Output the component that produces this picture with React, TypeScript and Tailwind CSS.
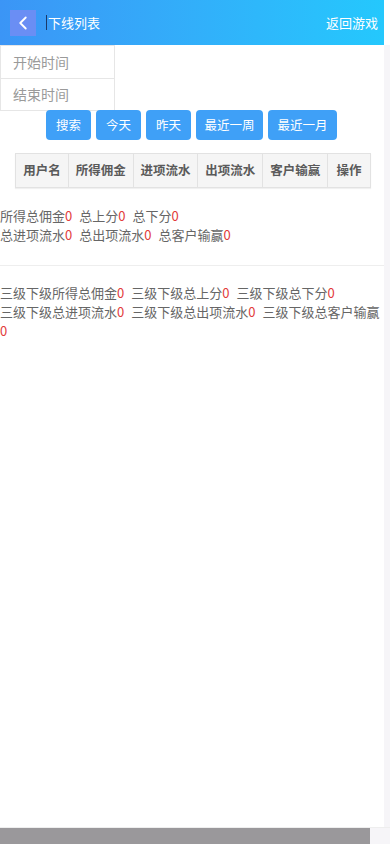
import { ChevronLeft } from 'lucide-react';

const cols = [
  { label: '用户名', w: 'w-[53px]' },
  { label: '所得佣金', w: 'w-[65px]' },
  { label: '进项流水', w: 'w-[65px]' },
  { label: '出项流水', w: 'w-[65px]' },
  { label: '客户输赢', w: 'w-[65px]' },
  { label: '操作', w: 'w-[42px]' },
];

const buttons = [
  { label: '搜索', w: 'w-[45px]' },
  { label: '今天', w: 'w-[45px]' },
  { label: '昨天', w: 'w-[45px]' },
  { label: '最近一周', w: 'w-[67px]' },
  { label: '最近一月', w: 'w-[69px]' },
];

function Stat({ label }: { label: string }) {
  return (
    <span className="mr-[7px] whitespace-nowrap">
      {label}
      <span className="text-[#e23b3b]">0</span>
    </span>
  );
}

export default function App() {
  return (
    <div
      className="w-[390px] h-[844px] flex flex-col bg-white overflow-hidden"
      style={{ fontFamily: '"Microsoft YaHei", "Noto Sans CJK SC", "Noto Sans", sans-serif' }}
    >
      <div className="flex flex-1 min-h-0">
        {/* Page */}
        <div className="w-[384px] flex flex-col">
          {/* Header */}
          <header className="h-[45px] flex items-center bg-gradient-to-r from-[#3b95f6] to-[#24c8fd] text-white pl-[10px] pr-[6px]">
            <div className="w-[26px] h-[26px] bg-[#6a8ef4] flex items-center justify-center">
              <ChevronLeft className="w-[22px] h-[22px]" strokeWidth={2} />
            </div>
            <div className="ml-[10px] flex items-center text-[13px]">
              <span className="w-[1px] h-[15px] bg-[#1b3a6a] mr-[1px]" />
              下线列表
            </div>
            <div className="flex-1" />
            <span className="text-[13px]">返回游戏</span>
          </header>

          {/* Date inputs */}
          <div className="flex flex-col">
            <div className="w-[115px] h-[34px] border border-[#e6e6e6] flex items-center pl-[12px] text-[14px] text-[#9a9a9a]">
              开始时间
            </div>
            <div className="w-[115px] h-[32px] border border-t-0 border-[#e6e6e6] flex items-center pl-[12px] text-[14px] text-[#9a9a9a]">
              结束时间
            </div>
          </div>

          {/* Buttons */}
          <div className="flex gap-[5px] pl-[46px] -mt-[1px]">
            {buttons.map((b) => (
              <button
                key={b.label}
                className={`${b.w} h-[30px] rounded-[4px] bg-[#3fa0f7] text-white text-[12.5px] flex items-center justify-center`}
              >
                {b.label}
              </button>
            ))}
          </div>

          {/* Table header */}
          <div className="mt-[13px] ml-[15px] flex w-[356px] h-[35px] bg-[#f5f5f5] border border-[#e2e2e2] shadow-[0_1px_1px_rgba(0,0,0,0.06)]">
            {cols.map((c, i) => (
              <div
                key={c.label}
                className={`${c.w} flex items-center justify-center text-[12.5px] font-semibold text-[#5a5a5a] ${i < cols.length - 1 ? 'border-r border-[#e2e2e2]' : ''}`}
              >
                {c.label}
              </div>
            ))}
          </div>

          {/* Totals */}
          <div className="mt-[18px] text-[13px] leading-[19px] text-[#666]">
            <div>
              <Stat label="所得总佣金" />
              <Stat label="总上分" />
              <Stat label="总下分" />
            </div>
            <div>
              <Stat label="总进项流水" />
              <Stat label="总出项流水" />
              <Stat label="总客户输赢" />
            </div>
          </div>

          <div className="mt-[21px] h-[1px] bg-[#eeeeee]" />

          {/* Level 3 totals */}
          <div className="mt-[17px] text-[13px] leading-[19px] text-[#666]">
            <Stat label="三级下级所得总佣金" />
            <Stat label="三级下级总上分" />
            <Stat label="三级下级总下分" />
            <Stat label="三级下级总进项流水" />
            <Stat label="三级下级总出项流水" />
            <span>
              三级下级总客户输赢
              <span className="text-[#e23b3b]">0</span>
            </span>
          </div>
        </div>

        {/* Vertical scrollbar track */}
        <div className="w-[6px] mt-[45px] bg-[#f6f5f8]" />
      </div>

      {/* Horizontal scrollbar */}
      <div className="h-[17px] flex border-t border-[#eeeeee]">
        <div className="w-[370px] bg-[#9a989b]" />
        <div className="flex-1 bg-[#f6f5f8]" />
      </div>
    </div>
  );
}
